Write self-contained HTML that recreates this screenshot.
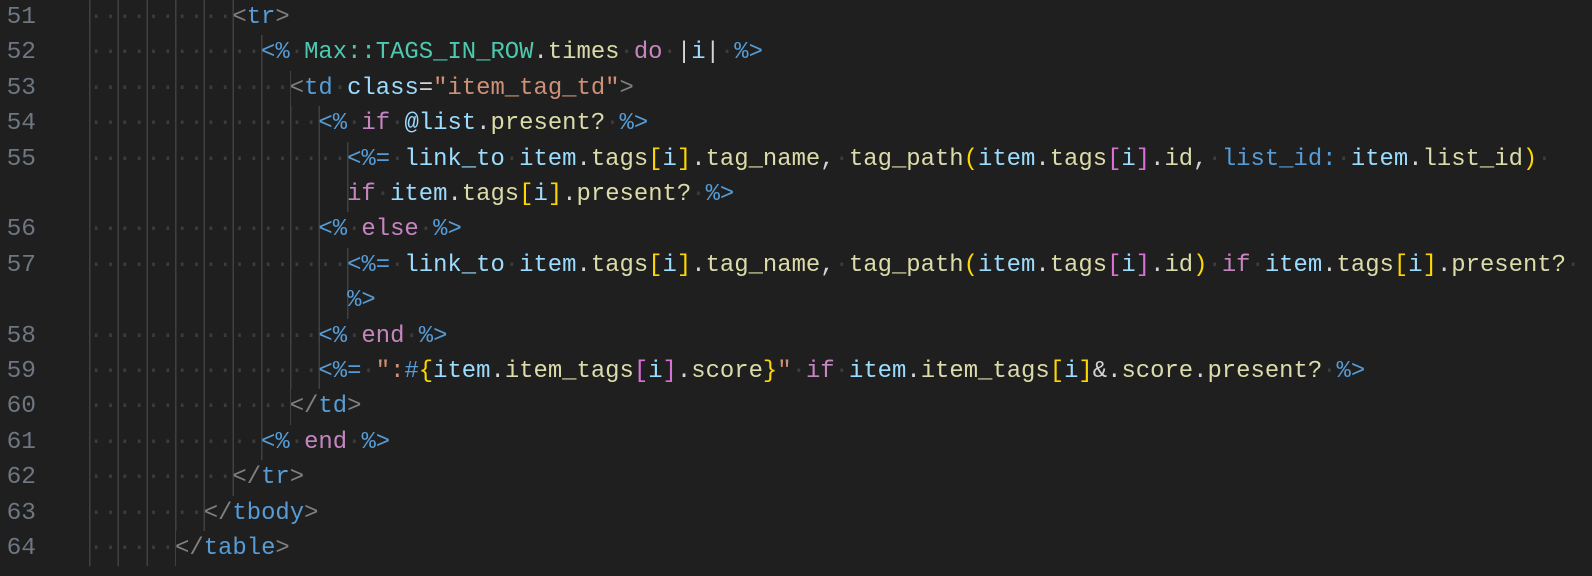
<!DOCTYPE html>
<html><head><meta charset="utf-8"><style>
html,body{margin:0;padding:0;background:#1f1f1f;width:1592px;height:576px;overflow:hidden}
.r{position:absolute;left:0;height:35.4px;line-height:35.4px;width:1592px;font-family:"Liberation Mono",monospace;font-size:23.9px;white-space:pre;color:#d4d4d4}
.n{position:absolute;left:6px;width:30px;text-align:right;color:#6e7681;font-size:24.5px}
.c{position:absolute;left:89px;top:0;height:35.4px;background-image:repeating-linear-gradient(to right,#404040 0 1.5px,transparent 1.5px 28.68px);background-repeat:no-repeat;background-position:0 0}
.w{color:#3c3c3c}
.g{color:#808080}.t{color:#569cd6}.a{color:#9cdcfe}.s{color:#ce9178}.k{color:#c586c0}.y{color:#4ec9b0}.f{color:#dcdcaa}.b1{color:#ffd700}.b2{color:#da70d6}.p{color:#d4d4d4}
</style></head><body>
<div class="r" style="top:0"><span class="n">51</span><span class="c" style="background-size:145px 100%"><span class="w">··········</span><span class="g">&lt;</span><span class="t">tr</span><span class="g">&gt;</span></span></div>
<div class="r" style="top:35.4px"><span class="n">52</span><span class="c" style="background-size:174px 100%"><span class="w">············</span><span class="t">&lt;%</span><span class="w">·</span><span class="y">Max::TAGS_IN_ROW</span><span class="p">.</span><span class="f">times</span><span class="w">·</span><span class="k">do</span><span class="w">·</span><span class="p">|</span><span class="a">i</span><span class="p">|</span><span class="w">·</span><span class="t">%&gt;</span></span></div>
<div class="r" style="top:70.8px"><span class="n">53</span><span class="c" style="background-size:202px 100%"><span class="w">··············</span><span class="g">&lt;</span><span class="t">td</span><span class="w">·</span><span class="a">class</span><span class="p">=</span><span class="s">"item_tag_td"</span><span class="g">&gt;</span></span></div>
<div class="r" style="top:106.2px"><span class="n">54</span><span class="c" style="background-size:231px 100%"><span class="w">················</span><span class="t">&lt;%</span><span class="w">·</span><span class="k">if</span><span class="w">·</span><span class="a">@list</span><span class="p">.</span><span class="f">present?</span><span class="w">·</span><span class="t">%&gt;</span></span></div>
<div class="r" style="top:141.6px"><span class="n">55</span><span class="c" style="background-size:260px 100%"><span class="w">··················</span><span class="t">&lt;%=</span><span class="w">·</span><span class="a">link_to</span><span class="w">·</span><span class="a">item</span><span class="p">.</span><span class="f">tags</span><span class="b1">[</span><span class="a">i</span><span class="b1">]</span><span class="p">.</span><span class="f">tag_name</span><span class="p">,</span><span class="w">·</span><span class="f">tag_path</span><span class="b1">(</span><span class="a">item</span><span class="p">.</span><span class="f">tags</span><span class="b2">[</span><span class="a">i</span><span class="b2">]</span><span class="p">.</span><span class="f">id</span><span class="p">,</span><span class="w">·</span><span class="t">list_id:</span><span class="w">·</span><span class="a">item</span><span class="p">.</span><span class="f">list_id</span><span class="b1">)</span><span class="w">·</span></span></div>
<div class="r" style="top:177px"><span class="c" style="background-size:260px 100%"><span>                  </span><span class="k">if</span><span class="w">·</span><span class="a">item</span><span class="p">.</span><span class="f">tags</span><span class="b1">[</span><span class="a">i</span><span class="b1">]</span><span class="p">.</span><span class="f">present?</span><span class="w">·</span><span class="t">%&gt;</span></span></div>
<div class="r" style="top:212.4px"><span class="n">56</span><span class="c" style="background-size:231px 100%"><span class="w">················</span><span class="t">&lt;%</span><span class="w">·</span><span class="k">else</span><span class="w">·</span><span class="t">%&gt;</span></span></div>
<div class="r" style="top:247.8px"><span class="n">57</span><span class="c" style="background-size:260px 100%"><span class="w">··················</span><span class="t">&lt;%=</span><span class="w">·</span><span class="a">link_to</span><span class="w">·</span><span class="a">item</span><span class="p">.</span><span class="f">tags</span><span class="b1">[</span><span class="a">i</span><span class="b1">]</span><span class="p">.</span><span class="f">tag_name</span><span class="p">,</span><span class="w">·</span><span class="f">tag_path</span><span class="b1">(</span><span class="a">item</span><span class="p">.</span><span class="f">tags</span><span class="b2">[</span><span class="a">i</span><span class="b2">]</span><span class="p">.</span><span class="f">id</span><span class="b1">)</span><span class="w">·</span><span class="k">if</span><span class="w">·</span><span class="a">item</span><span class="p">.</span><span class="f">tags</span><span class="b1">[</span><span class="a">i</span><span class="b1">]</span><span class="p">.</span><span class="f">present?</span><span class="w">·</span></span></div>
<div class="r" style="top:283.2px"><span class="c" style="background-size:260px 100%"><span>                  </span><span class="t">%&gt;</span></span></div>
<div class="r" style="top:318.6px"><span class="n">58</span><span class="c" style="background-size:231px 100%"><span class="w">················</span><span class="t">&lt;%</span><span class="w">·</span><span class="k">end</span><span class="w">·</span><span class="t">%&gt;</span></span></div>
<div class="r" style="top:354px"><span class="n">59</span><span class="c" style="background-size:231px 100%"><span class="w">················</span><span class="t">&lt;%=</span><span class="w">·</span><span class="s">"</span><span class="s">:</span><span class="t">#</span><span class="b1">{</span><span class="a">item</span><span class="p">.</span><span class="f">item_tags</span><span class="b2">[</span><span class="a">i</span><span class="b2">]</span><span class="p">.</span><span class="f">score</span><span class="b1">}</span><span class="s">"</span><span class="w">·</span><span class="k">if</span><span class="w">·</span><span class="a">item</span><span class="p">.</span><span class="f">item_tags</span><span class="b1">[</span><span class="a">i</span><span class="b1">]</span><span class="p">&amp;.</span><span class="f">score</span><span class="p">.</span><span class="f">present?</span><span class="w">·</span><span class="t">%&gt;</span></span></div>
<div class="r" style="top:389.4px"><span class="n">60</span><span class="c" style="background-size:202px 100%"><span class="w">··············</span><span class="g">&lt;/</span><span class="t">td</span><span class="g">&gt;</span></span></div>
<div class="r" style="top:424.8px"><span class="n">61</span><span class="c" style="background-size:174px 100%"><span class="w">············</span><span class="t">&lt;%</span><span class="w">·</span><span class="k">end</span><span class="w">·</span><span class="t">%&gt;</span></span></div>
<div class="r" style="top:460.2px"><span class="n">62</span><span class="c" style="background-size:145px 100%"><span class="w">··········</span><span class="g">&lt;/</span><span class="t">tr</span><span class="g">&gt;</span></span></div>
<div class="r" style="top:495.6px"><span class="n">63</span><span class="c" style="background-size:116px 100%"><span class="w">········</span><span class="g">&lt;/</span><span class="t">tbody</span><span class="g">&gt;</span></span></div>
<div class="r" style="top:531px"><span class="n">64</span><span class="c" style="background-size:87px 100%"><span class="w">······</span><span class="g">&lt;/</span><span class="t">table</span><span class="g">&gt;</span></span></div>
</body></html>
